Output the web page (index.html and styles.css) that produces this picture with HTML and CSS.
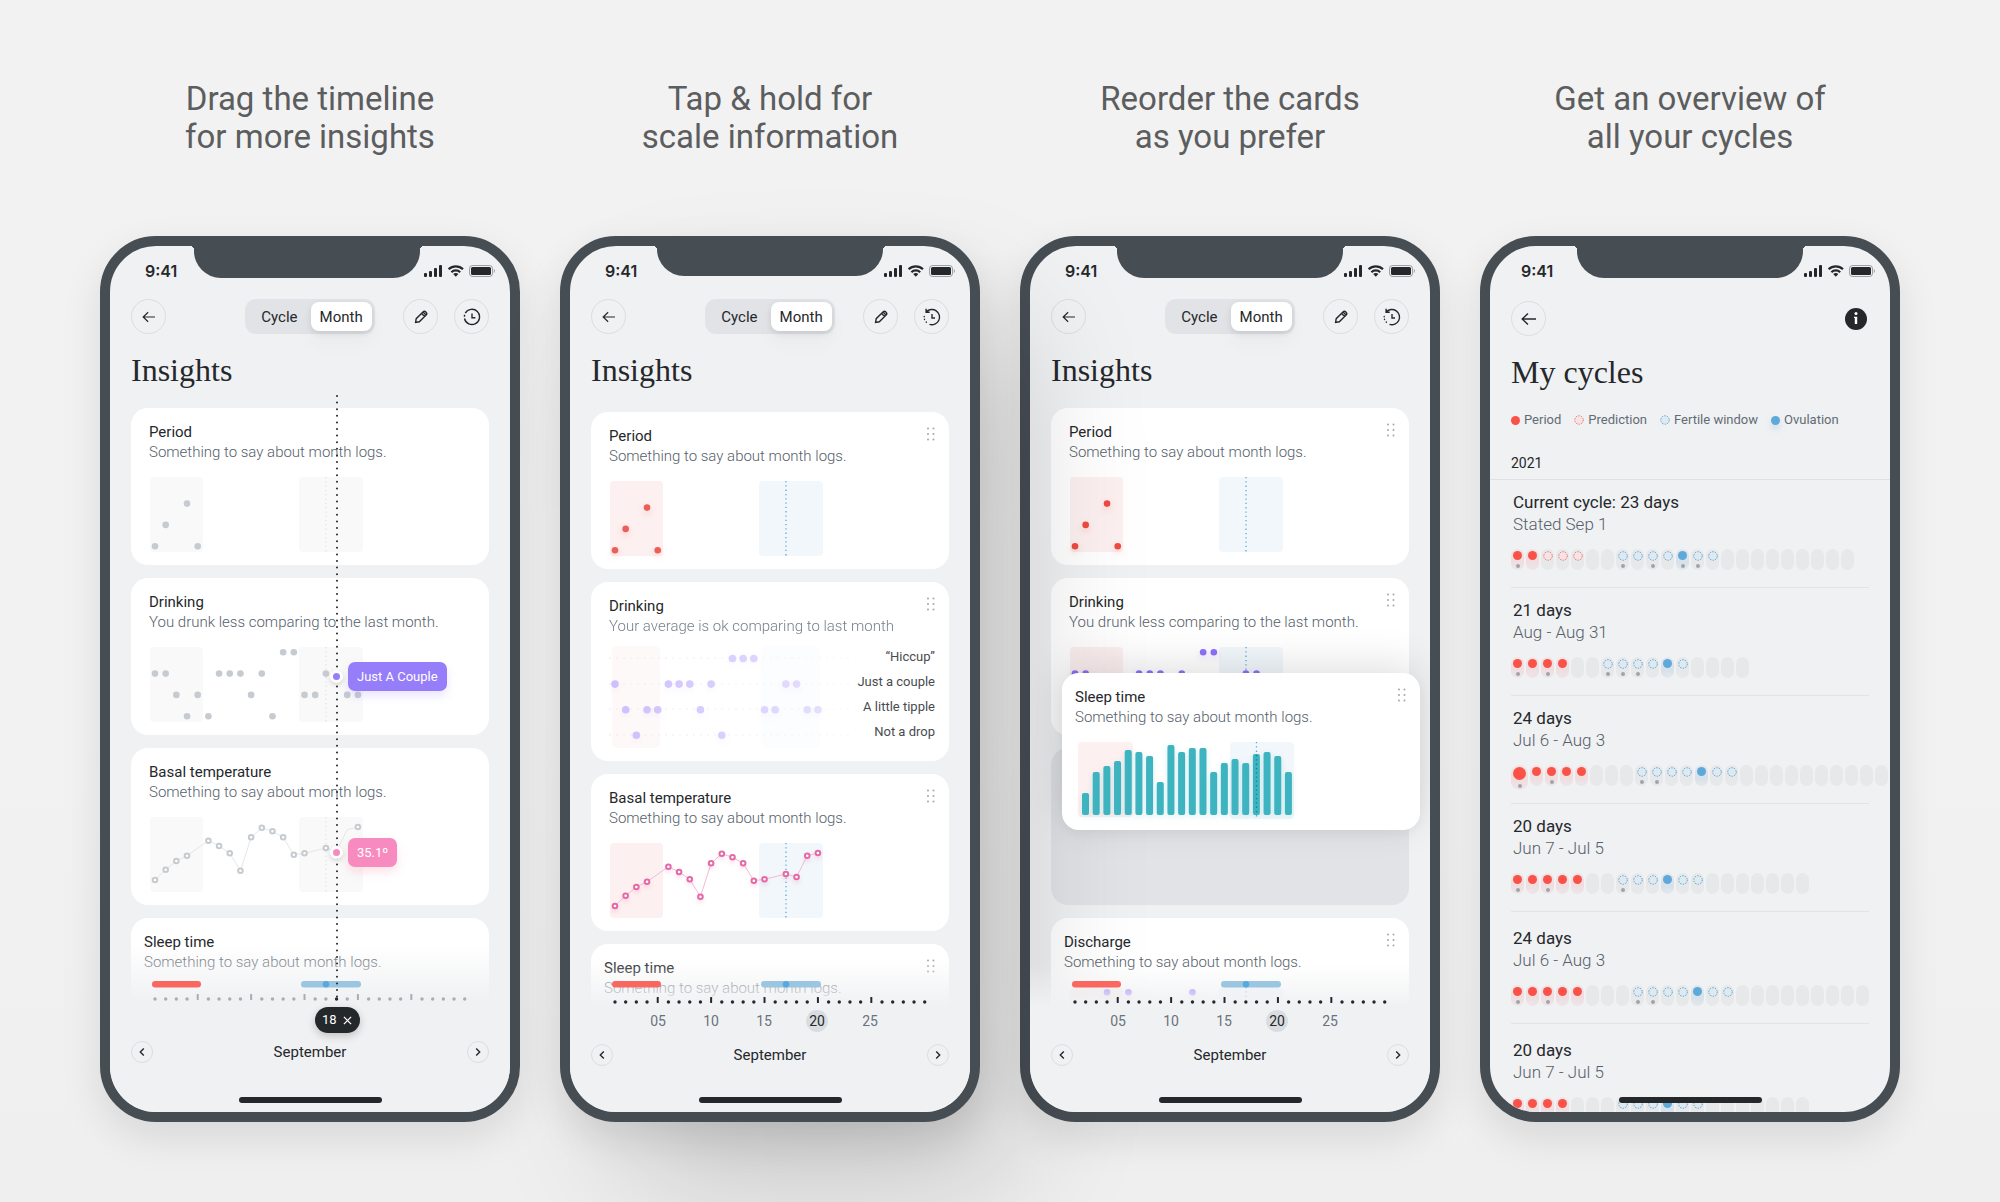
FILE: index.html
```html
<!DOCTYPE html>
<html lang="en">
<head>
    <meta charset="UTF-8">
    <meta name="viewport" content="width=device-width, initial-scale=1.0">
    <title>Cycle insights</title>
    <link rel="stylesheet" href="styles.css">
</head>
<body>
    <!-- shared icons -->
    <svg class="sprite" aria-hidden="true">
        <symbol id="icon-status" viewBox="0 0 71 14">
            <rect x="0" y="9" width="3" height="4" rx="1" />
            <rect x="5" y="7" width="3" height="6" rx="1" />
            <rect x="10" y="4" width="3" height="9" rx="1" />
            <rect x="15" y="1" width="3" height="12" rx="1" />
            <g fill="none" stroke="currentColor" stroke-width="2.2">
                <path d="M24.6 5.2a10.4 10.4 0 0 1 14.4 0" />
                <path d="M27.4 8.2a6.3 6.3 0 0 1 8.8 0" />
            </g>
            <path d="M31.8 12.8l-2.6-2.7a3.8 3.8 0 0 1 5.2 0z" />
            <rect x="45.5" y="1.5" width="23" height="11" rx="3" fill="none" stroke="currentColor" opacity=".4" />
            <rect x="47" y="3" width="20" height="8" rx="1.5" />
            <path d="M69.8 5v4c1.4-.5 1.4-3.500 0-4z" opacity=".4" />
        </symbol>
        <symbol id="icon-back" viewBox="0 0 18 14">
            <path d="M16 7H2.500M8 1.500L2.200 7 8 12.500" />
        </symbol>
        <symbol id="icon-pencil" viewBox="0 0 14 14">
            <path d="M1.600 12.400l.6-3.700 6.800-6.800c.8-.8 1.900-.8 2.600-.1l.6.6c.7.7.7 1.800-.1 2.600l-6.800 6.800zM7.600 3.400l3 3M9 2l3 3" />
        </symbol>
        <symbol id="icon-clock" viewBox="0 0 18 18">
            <path d="M2.300 5.200A7.600 7.600 0 1 1 1.500 10.500M1.500 8.800V6.800M9 5.500v4.200h3.400" />
        </symbol>
        <symbol id="icon-history" viewBox="0 0 18 18">
            <path d="M3.300 4A7.600 7.600 0 1 1 6.500 16.300M3.100.8v3.500h3.600M9 6v4h3" />
            <path d="M1.200 8.500v.2M1.500 11.300v.2M3.300 14v.2" stroke-linecap="round" />
        </symbol>
        <symbol id="icon-prev" viewBox="0 0 8 10">
            <path d="M5.800 1.500L2.300 5l3.500 3.500" />
        </symbol>
        <symbol id="icon-next" viewBox="0 0 8 10">
            <path d="M2.200 1.500L5.700 5 2.200 8.500" />
        </symbol>
        <symbol id="icon-close" viewBox="0 0 10 10">
            <path d="M1 1l8 8M9 1L1 9" />
        </symbol>
        <symbol id="icon-ring" viewBox="0 0 10 10">
            <circle cx="5" cy="5" r="4.300" stroke-dasharray="1.500 1.200" />
        </symbol>
        <symbol id="icon-grip" viewBox="0 0 8 14">
            <circle cx="1" cy="1.500" r="1" /><circle cx="6.500" cy="1.500" r="1" />
            <circle cx="1" cy="7" r="1" /><circle cx="6.500" cy="7" r="1" />
            <circle cx="1" cy="12.500" r="1" /><circle cx="6.500" cy="12.500" r="1" />
        </symbol>
    </svg>

    <main class="features">
        <!-- drag the timeline -->
        <section class="feature">
            <h2 class="caption">Drag the timeline<br>for more insights</h2>
            <div class="phone">
                <div class="screen muted">
                    <div class="notch notch-left"></div>
                    <div class="status"><span>9:41</span><svg class="status-icons"><use href="#icon-status" /></svg></div>
                    <header class="toolbar">
                        <button class="round" type="button" aria-label="Back"><svg class="icon-back"><use href="#icon-back" /></svg></button>
                        <div class="segment">
                            <button type="button">Cycle</button>
                            <button type="button" class="active">Month</button>
                        </div>
                        <div class="actions">
                            <button class="round" type="button" aria-label="Edit"><svg class="icon-pencil"><use href="#icon-pencil" /></svg></button>
                            <button class="round" type="button" aria-label="History"><svg class="icon-clock"><use href="#icon-clock" /></svg></button>
                        </div>
                    </header>
                    <h3 class="title">Insights</h3>
                    <div class="cards">
                        <article class="card">
                            <h4>Period</h4>
                            <p>Something to say about month logs.</p>
                            <div class="chart" data-chart="period"></div>
                        </article>
                        <article class="card">
                            <h4>Drinking</h4>
                            <p>You drunk less comparing to the last month.</p>
                            <div class="chart" data-chart="drinking" data-skip="18">
                                <div class="marker marker-drink"><i></i><span>Just A Couple</span></div>
                            </div>
                        </article>
                        <article class="card">
                            <h4>Basal temperature</h4>
                            <p>Something to say about month logs.</p>
                            <div class="chart" data-chart="temperature" data-skip="18">
                                <div class="marker marker-temp"><i></i><span>35.1º</span></div>
                            </div>
                        </article>
                        <article class="card card-tight">
                            <h4>Sleep time</h4>
                            <p>Something to say about month logs.</p>
                            <div class="chart"></div>
                        </article>
                    </div>
                    <svg class="cursor"><line x1="2" y1="2" x2="2" y2="603" /></svg>
                    <footer class="dock dock-picked">
                        <div class="timeline" data-current="18"></div>
                        <div class="picked">
                            <span>18</span>
                            <button type="button" aria-label="Clear day"><svg class="icon-close"><use href="#icon-close" /></svg></button>
                        </div>
                        <div class="month">
                            <button class="round small" type="button" aria-label="Previous month"><svg class="icon-step"><use href="#icon-prev" /></svg></button>
                            <span>September</span>
                            <button class="round small" type="button" aria-label="Next month"><svg class="icon-step"><use href="#icon-next" /></svg></button>
                        </div>
                        <div class="home"></div>
                    </footer>
                </div>
            </div>
        </section>

        <!-- tap & hold -->
        <section class="feature feature-front">
            <h2 class="caption">Tap &amp; hold for<br>scale information</h2>
            <div class="phone phone-front">
                <div class="screen">
                    <div class="notch notch-short"></div>
                    <div class="status"><span>9:41</span><svg class="status-icons"><use href="#icon-status" /></svg></div>
                    <header class="toolbar">
                        <button class="round" type="button" aria-label="Back"><svg class="icon-back"><use href="#icon-back" /></svg></button>
                        <div class="segment">
                            <button type="button">Cycle</button>
                            <button type="button" class="active">Month</button>
                        </div>
                        <div class="actions">
                            <button class="round" type="button" aria-label="Edit"><svg class="icon-pencil"><use href="#icon-pencil" /></svg></button>
                            <button class="round" type="button" aria-label="History"><svg class="icon-clock"><use href="#icon-history" /></svg></button>
                        </div>
                    </header>
                    <h3 class="title">Insights</h3>
                    <div class="cards cards-low">
                        <article class="card soft">
                            <button class="grip" type="button" aria-label="Move card"><svg><use href="#icon-grip" /></svg></button>
                            <h4>Period</h4>
                            <p>Something to say about month logs.</p>
                            <div class="chart" data-chart="period"></div>
                        </article>
                        <article class="card">
                            <button class="grip" type="button" aria-label="Move card"><svg><use href="#icon-grip" /></svg></button>
                            <h4>Drinking</h4>
                            <p class="faded">Your average is ok comparing to last month</p>
                            <div class="scale">
                                <div class="scale-chart" data-chart="scale"></div>
                                <ul>
                                    <li>“Hiccup”</li>
                                    <li>Just a couple</li>
                                    <li>A little tipple</li>
                                    <li>Not a drop</li>
                                </ul>
                            </div>
                        </article>
                        <article class="card soft">
                            <button class="grip" type="button" aria-label="Move card"><svg><use href="#icon-grip" /></svg></button>
                            <h4>Basal temperature</h4>
                            <p>Something to say about month logs.</p>
                            <div class="chart" data-chart="temperature"></div>
                        </article>
                        <article class="card card-tight">
                            <button class="grip" type="button" aria-label="Move card"><svg><use href="#icon-grip" /></svg></button>
                            <h4>Sleep time</h4>
                            <p>Something to say about month logs.</p>
                            <div class="chart"></div>
                        </article>
                    </div>
                    <footer class="dock">
                        <div class="timeline"></div>
                        <div class="days"><span>05</span><span>10</span><span>15</span><span class="today">20</span><span>25</span></div>
                        <div class="month">
                            <button class="round small" type="button" aria-label="Previous month"><svg class="icon-step"><use href="#icon-prev" /></svg></button>
                            <span>September</span>
                            <button class="round small" type="button" aria-label="Next month"><svg class="icon-step"><use href="#icon-next" /></svg></button>
                        </div>
                        <div class="home"></div>
                    </footer>
                </div>
            </div>
        </section>

        <!-- reorder -->
        <section class="feature">
            <h2 class="caption">Reorder the cards<br>as you prefer</h2>
            <div class="phone">
                <div class="screen">
                    <div class="notch"></div>
                    <div class="status"><span>9:41</span><svg class="status-icons"><use href="#icon-status" /></svg></div>
                    <header class="toolbar">
                        <button class="round" type="button" aria-label="Back"><svg class="icon-back"><use href="#icon-back" /></svg></button>
                        <div class="segment">
                            <button type="button">Cycle</button>
                            <button type="button" class="active">Month</button>
                        </div>
                        <div class="actions">
                            <button class="round" type="button" aria-label="Edit"><svg class="icon-pencil"><use href="#icon-pencil" /></svg></button>
                            <button class="round" type="button" aria-label="History"><svg class="icon-clock"><use href="#icon-history" /></svg></button>
                        </div>
                    </header>
                    <h3 class="title">Insights</h3>
                    <div class="cards">
                        <article class="card">
                            <button class="grip" type="button" aria-label="Move card"><svg><use href="#icon-grip" /></svg></button>
                            <h4>Period</h4>
                            <p>Something to say about month logs.</p>
                            <div class="chart" data-chart="period"></div>
                        </article>
                        <article class="card">
                            <button class="grip" type="button" aria-label="Move card"><svg><use href="#icon-grip" /></svg></button>
                            <h4>Drinking</h4>
                            <p>You drunk less comparing to the last month.</p>
                            <div class="chart" data-chart="drinking"></div>
                        </article>
                        <div class="slot">
                            <article class="card card-tight dragged">
                                <button class="grip" type="button" aria-label="Move card"><svg><use href="#icon-grip" /></svg></button>
                                <h4>Sleep time</h4>
                                <p>Something to say about month logs.</p>
                                <div class="chart" data-chart="sleep"></div>
                            </article>
                        </div>
                        <article class="card card-tight">
                            <button class="grip" type="button" aria-label="Move card"><svg><use href="#icon-grip" /></svg></button>
                            <h4>Discharge</h4>
                            <p>Something to say about month logs.</p>
                            <div class="chart chart-inset" data-chart="discharge"></div>
                        </article>
                    </div>
                    <footer class="dock dock-late">
                        <div class="timeline"></div>
                        <div class="days"><span>05</span><span>10</span><span>15</span><span class="today">20</span><span>25</span></div>
                        <div class="month">
                            <button class="round small" type="button" aria-label="Previous month"><svg class="icon-step"><use href="#icon-prev" /></svg></button>
                            <span>September</span>
                            <button class="round small" type="button" aria-label="Next month"><svg class="icon-step"><use href="#icon-next" /></svg></button>
                        </div>
                        <div class="home"></div>
                    </footer>
                </div>
            </div>
        </section>

        <!-- overview -->
        <section class="feature">
            <h2 class="caption">Get an overview of<br>all your cycles</h2>
            <div class="phone">
                <div class="screen">
                    <div class="notch"></div>
                    <div class="status status-wide"><span>9:41</span><svg class="status-icons"><use href="#icon-status" /></svg></div>
                    <header class="toolbar toolbar-low">
                        <button class="round" type="button" aria-label="Back"><svg class="icon-back large"><use href="#icon-back" /></svg></button>
                        <button class="info" type="button" aria-label="Info">
                            <svg viewBox="0 0 22 22"><circle cx="11" cy="11" r="11" /><circle class="cut" cx="11" cy="5.600" r="1.500" /><path class="cut" d="M9 8.700h3.200v7.300h-2.400v-6H9z" /></svg>
                        </button>
                    </header>
                    <h3 class="title">My cycles</h3>
                    <ul class="legend">
                        <li><i class="dot period"></i>Period</li>
                        <li><svg class="dot prediction" aria-hidden="true"><use href="#icon-ring" /></svg>Prediction</li>
                        <li><svg class="dot fertile" aria-hidden="true"><use href="#icon-ring" /></svg>Fertile window</li>
                        <li><i class="dot ovulation"></i>Ovulation</li>
                    </ul>
                    <p class="year">2021</p>
                    <div class="cycles">
                        <article class="cycle">
                            <h4>Current cycle: 23 days</h4>
                            <p>Stated Sep 1</p>
                            <div class="strip" data-days="p* p r r r - - f* f f* f o* f* f - - - - - - - - -"></div>
                        </article>
                        <article class="cycle">
                            <h4>21 days</h4>
                            <p>Aug - Aug 31</p>
                            <div class="strip" data-days="p* p p* p - - f* f* f* f o f - - - -"></div>
                        </article>
                        <article class="cycle">
                            <h4>24 days</h4>
                            <p>Jul 6 - Aug 3</p>
                            <div class="strip strip-first" data-days="p* p p* p p - - - f* f* f f o f f - - - - - - - - - - -"></div>
                        </article>
                        <article class="cycle">
                            <h4>20 days</h4>
                            <p>Jun 7 - Jul 5</p>
                            <div class="strip" data-days="p* p p* p p - - f* f f o f f - - - - - - -"></div>
                        </article>
                        <article class="cycle roomy">
                            <h4>24 days</h4>
                            <p>Jul 6 - Aug 3</p>
                            <div class="strip" data-days="p* p p* p p - - - f* f* f f o f f - - - - - - - - -"></div>
                        </article>
                        <article class="cycle roomy">
                            <h4>20 days</h4>
                            <p>Jun 7 - Jul 5</p>
                            <div class="strip" data-days="p p p p - - - f f f o f f - - - - - - -"></div>
                        </article>
                    </div>
                    <footer class="dock dock-bare">
                        <div class="home"></div>
                    </footer>
                </div>
            </div>
        </section>
    </main>
    <script src="script.js"></script>
</body>
</html>
```

FILE: styles.css
```css
* {
    box-sizing: border-box;
}

body {
    margin: 0;
    background-color: #f2f2f2;
    background-image: linear-gradient(#f2f2f2 60%, #efefef);
    color: #25282b;
    font-family: Roboto, "Liberation Sans", sans-serif;
    font-size: 15px;
    line-height: 20px;
    min-height: 100vh;
    overflow-x: hidden;
}

h2, h3, h4, p, ul {
    margin: 0;
    padding: 0;
    font-weight: 400;
    list-style: none;
}

button {
    margin: 0;
    padding: 0;
    border: none;
    background: none;
    color: inherit;
    font: inherit;
    cursor: pointer;
}

svg {
    display: block;
}

.sprite {
    position: absolute;
    width: 0;
    height: 0;
}

.features {
    display: grid;
    grid-template-columns: repeat(4, minmax(0, 1fr));
    gap: 40px;
    padding: 80px 100px;
}

.caption {
    margin-bottom: 80px;
    color: #5c5d5e;
    font-size: 33px;
    line-height: 38px;
    text-align: center;
    white-space: nowrap;
}

/* phone frame */
.phone {
    aspect-ratio: 420 / 886;
    min-height: 0;
    border: 10px solid #464d53;
    border-radius: 56px;
    background: #f0f1f3;
    box-shadow: 0 16px 40px rgba(0, 0, 0, 0.1);
}

.feature-front {
    position: relative;
    z-index: 1;
}

.phone-front {
    box-shadow: 0 16px 40px rgba(0, 0, 0, 0.1), 50px 70px 140px -20px rgba(0, 0, 0, 0.2);
}

.screen {
    position: relative;
    height: 100%;
    overflow: hidden;
    border-radius: 46px;
}

.notch {
    position: absolute;
    top: -1px;
    left: 50%;
    width: 226px;
    height: 33px;
    margin-left: -113px;
    border-radius: 0 0 27px 27px;
    background: #464d53;
}

.notch-left {
    margin-left: -116px;
}

.notch-short {
    height: 31px;
}

.notch::before,
.notch::after {
    content: "";
    position: absolute;
    top: 1px;
    width: 4px;
    height: 4px;
}

.notch::before {
    right: 100%;
    background: radial-gradient(circle at 0 100%, transparent 4px, #464d53 4px);
}

.notch::after {
    left: 100%;
    background: radial-gradient(circle at 100% 100%, transparent 4px, #464d53 4px);
}

.status {
    display: flex;
    align-items: center;
    justify-content: space-between;
    height: 50px;
    padding: 0 15px 0 35px;
    font-family: Inter, sans-serif;
    font-size: 16px;
    font-weight: 600;
}

.status-wide {
    padding-left: 31px;
}

.status-icons {
    width: 71px;
    height: 14px;
    fill: currentColor;
}

.toolbar {
    display: grid;
    grid-template-columns: 1fr auto 1fr;
    align-items: center;
    margin-top: 3px;
    padding: 0 21px;
}

.toolbar-low {
    grid-template-columns: auto auto;
    justify-content: space-between;
    margin-top: 5px;
    padding-right: 23px;
}

.actions {
    display: flex;
    justify-content: flex-end;
    gap: 16px;
}

.round {
    display: flex;
    align-items: center;
    justify-content: center;
    width: 35px;
    height: 35px;
    border: 1px solid #dcdde0;
    border-radius: 50%;
}

.round svg,
.icon-close {
    fill: none;
    stroke: currentColor;
    stroke-width: 1.4;
}

.round.small {
    width: 22px;
    height: 22px;
}

.icon-back {
    width: 16px;
    height: 12px;
}

.icon-back.large {
    width: 18px;
    height: 14px;
}

.icon-pencil {
    width: 14px;
    height: 14px;
}

.icon-clock {
    width: 18px;
    height: 18px;
}

.icon-step {
    width: 8px;
    height: 10px;
}

.icon-close {
    width: 9px;
    height: 9px;
}

.info svg {
    width: 22px;
    height: 22px;
    fill: #25282b;
}

.info .cut {
    fill: #fff;
}

.segment {
    display: flex;
    padding: 3px;
    border-radius: 11px;
    background: #e2e3e7;
}

.segment button {
    height: 29px;
    padding: 0 9px;
    border-radius: 8px;
}

.segment button:first-child {
    padding: 0 13px;
}

.segment .active {
    background: #fff;
    box-shadow: 0 2px 6px rgba(0, 0, 0, 0.1), 0 12px 20px rgba(0, 0, 0, 0.03);
}

.title {
    margin: 16px 21px 0;
    font-family: "Liberation Serif", serif;
    font-size: 32px;
    line-height: 40px;
}

/* cards */
.cards {
    display: flex;
    flex-direction: column;
    gap: 13px;
    padding: 18px 21px 0;
}

.cards-low {
    padding-top: 22px;
}

.card {
    position: relative;
    padding: 14px 14px 13px 18px;
    border-radius: 17px;
    background: #fff;
}

.card-tight {
    padding-left: 13px;
}

.card h4 {
    font-size: 15px;
}

.card p {
    color: #56606a;
    font-weight: 300;
}

.card .faded {
    opacity: 0.8;
}

.grip {
    float: right;
    margin-top: 1px;
}

.grip svg {
    width: 8px;
    height: 14px;
    fill: #a3a7ab;
}

.chart {
    position: relative;
    height: 75px;
    margin-top: 15px;
}

.chart svg {
    width: 216px;
    height: 75px;
    overflow: visible;
}

.chart-inset {
    margin-left: 5px;
}

.zone-period {
    fill: #fdf0f0;
}

.zone-fertile {
    fill: #f2f7fb;
}

.ovulation-line {
    stroke: #5aa9dc;
    stroke-width: 1.3;
    stroke-dasharray: 1.3 3;
}

.dots circle {
    fill: #ef4a41;
    filter: drop-shadow(0 3px 3px rgba(240, 70, 60, 0.2));
}

.soft .dots circle {
    fill: #ec5f59;
}

.dots-purple circle {
    fill: #8f70fb;
    filter: drop-shadow(0 3px 3px rgba(143, 112, 251, 0.2));
}

.temp-line {
    fill: none;
    stroke: #f3bcd8;
    stroke-width: 1;
}

.temp-points circle {
    fill: #fff;
    stroke: #e569a7;
    stroke-width: 2;
    filter: drop-shadow(0 3px 2px rgba(229, 105, 167, 0.2));
}

.bars rect {
    fill: #3db4c0;
    filter: drop-shadow(0 2px 3px rgba(61, 180, 192, 0.2));
}

.line-over {
    stroke: #14808f;
    stroke-width: 1.3;
    stroke-dasharray: 1.3 3;
}

.muted .zone-period,
.muted .zone-fertile {
    fill: #f9f9f9;
}

.muted .ovulation-line {
    stroke: #dfe2e4;
}

.muted .dots circle {
    fill: #c5cbd0;
    filter: none;
}

.muted .temp-line {
    stroke: #e4e7e9;
}

.muted .temp-points circle {
    stroke: #c5cbd0;
    filter: none;
}

/* value bubble next to the dragged cursor */
.marker {
    position: absolute;
    left: 181px;
    z-index: 3;
    display: flex;
    align-items: center;
    gap: 5px;
    height: 29px;
    color: #fff;
    font-size: 13px;
}

.marker-drink {
    --tint: #967dfa;
    top: 15px;
}

.marker-temp {
    --tint: #f78bbf;
    top: 21px;
}

.marker i {
    width: 13px;
    height: 13px;
    border: 3px solid #fff;
    border-radius: 50%;
    background: var(--tint);
    box-shadow: 0 2px 5px rgba(0, 0, 0, 0.15);
}

.marker span {
    padding: 0 9px;
    border-radius: 7px;
    background: var(--tint);
    line-height: 29px;
    box-shadow: 0 5px 10px rgba(150, 125, 250, 0.2);
}

.marker-temp span {
    box-shadow: 0 5px 10px rgba(247, 139, 160, 0.25);
}

.cursor {
    position: absolute;
    top: 148px;
    left: 225px;
    z-index: 2;
    width: 4px;
    height: 605px;
    stroke: #25282b;
    stroke-width: 2;
    stroke-linecap: round;
    stroke-dasharray: 0 6.6;
}

/* scale card */
.scale {
    display: flex;
    justify-content: space-between;
    height: 102px;
    margin-top: 10px;
}

.scale-chart {
    mask-image: linear-gradient(to right, rgba(0, 0, 0, 0.45), rgba(0, 0, 0, 0.2));
}

.scale-chart svg {
    width: 240px;
    height: 102px;
}

.scale-rule {
    stroke: #d2d5d9;
    stroke-dasharray: 2 5;
}

.scale ul {
    margin-top: -2px;
    color: #484c50;
    font-size: 13px;
    line-height: 25px;
    text-align: right;
    white-space: nowrap;
}

/* empty place left by the card being moved */
.slot {
    position: relative;
    height: 157px;
    border-radius: 17px;
    background: #e2e3e7;
}

.dragged {
    position: absolute;
    top: -75px;
    left: 11px;
    z-index: 1;
    width: 100%;
    box-shadow: 0 -8px 40px rgba(0, 0, 0, 0.12), 0 4px 12px rgba(0, 0, 0, 0.04);
}

/* bottom dock */
.dock {
    position: absolute;
    right: 0;
    bottom: 0;
    left: 0;
    z-index: 1;
    padding: 36px 21px 9px;
    background: linear-gradient(rgba(240, 241, 243, 0) 14px, #f0f1f3 62px);
}

.dock-picked {
    background: linear-gradient(rgba(240, 241, 243, 0), #f0f1f3 56px);
}

.dock-late {
    background: linear-gradient(rgba(240, 241, 243, 0) 20px, #f0f1f3 62px);
}

.dock-bare {
    padding-top: 0;
    background: none;
}

.timeline {
    height: 24px;
    padding-left: 18px;
}

.timeline svg {
    width: 322px;
    height: 24px;
}

.track-period {
    fill: #f86860;
}

.track-fertile {
    fill: #9ac6e1;
}

.track-ovulation {
    fill: #5aa9dc;
}

.ticks {
    fill: #25282b;
}

.muted .ticks {
    fill: #a9adb1;
}

.muted .ticks .current {
    fill: #25282b;
}

.days {
    display: flex;
    margin: 5px 0 12px 56px;
    gap: 31px;
    color: #6a737b;
    font-size: 14px;
    line-height: 22px;
    text-align: center;
}

.days span {
    width: 22px;
}

.days .today {
    border-radius: 50%;
    background: #d9dce0;
    color: #25282b;
}

.picked {
    display: flex;
    align-items: center;
    justify-content: space-between;
    width: 45px;
    height: 26px;
    margin: 2px 0 8px 184px;
    padding: 0 8px 0 7px;
    border-radius: 13px;
    background: #25282b;
    color: #fff;
    font-size: 13px;
    box-shadow: 0 3px 8px rgba(0, 0, 0, 0.2);
}

.month {
    display: flex;
    align-items: center;
    justify-content: space-between;
}

.home {
    width: 143px;
    height: 6px;
    margin: 31px auto 0;
    border-radius: 3px;
    background: #25282b;
}

.dock-picked .home {
    margin-top: 34px;
}

/* cycles overview */
.legend {
    display: flex;
    gap: 13px;
    margin: 19px 21px 0;
    color: #626c75;
    font-size: 13px;
    line-height: 18px;
    white-space: nowrap;
}

.legend li {
    display: flex;
    align-items: center;
    gap: 4px;
}

.dot {
    width: 9px;
    height: 9px;
    border-radius: 50%;
}

.dot.period {
    background: #fa5248;
}

.dot.prediction,
.dot.fertile {
    width: 10px;
    height: 10px;
}

.dot.prediction {
    fill: #f5e4e5;
    stroke: #f4655d;
}

.dot.fertile {
    fill: #dfe9f0;
    stroke: #4f9fd3;
}

.dot.ovulation {
    background: #5fa9da;
}

.legend .ovulation {
    box-shadow: 0 4px 6px rgba(95, 169, 218, 0.25);
}

.year {
    margin-top: 24px;
    padding: 0 21px 6px;
    border-bottom: 1px solid #e0e1e4;
    font-size: 14px;
}

.cycles {
    padding: 0 21px;
}

.cycle {
    height: 108px;
    padding: 11px 0 17px;
    border-bottom: 1px solid #e2e3e5;
    line-height: 22px;
}

.cycle.roomy {
    height: 112px;
    padding-top: 15px;
}

.cycle h4,
.cycle p {
    padding-left: 2px;
    font-size: 17px;
}

.cycle p {
    color: #56606a;
    font-weight: 300;
}

.strip {
    display: flex;
    align-items: flex-start;
    gap: 2px;
    margin-top: 14px;
}

.day {
    display: flex;
    flex: none;
    flex-direction: column;
    align-items: center;
    justify-content: space-between;
    width: 13px;
    height: 21px;
    padding: 2px 0;
    border-radius: 7px;
    background: #e7e8ea;
}

.day.is-period {
    background: linear-gradient(#eee4e6, #f0dddf 60%, #ebe6e9);
}

.day.is-ovulation {
    background: linear-gradient(#e3e8ed, #d6e1ea 60%, #e5e8eb);
}

.note {
    width: 4px;
    height: 4px;
    border-radius: 50%;
    background: #a2a3a8;
}

.strip-first .day:first-child {
    width: 17px;
    height: 25px;
    border-radius: 9px;
}

.strip-first .day:first-child .dot {
    width: 13px;
    height: 13px;
}
```

FILE: script.js
```js
const STEP = 10.68;
const dayX = (day) => 6 + STEP * (day - 1);

// level 0 is the top row, null means nothing was logged
const period = [3, 2, null, 1, 3];
const drinking = [1, 1, 2, 3, 2, 3, 1, 1, 1, 2, 1, 3, 0, 0, 2, 2, 1, 1, 2, 2];
const scale = [1, 2, 3, 2, 2, 1, 1, 1, 2, 1, 3, 0, 0, 0, 2, 2, 1, 1, 2, 2];
const discharge = [null, null, null, 0, null, 0, null, null, null, null, null, 0];
const temperature = [63, 52.7, 44, 38.7, null, 23.7, 29, 36.3, 53.7, 20.3, 10.7, 14.3, 20.3, 37.7, 36.3, null, 31, 34, 12.7, 10];
const sleep = [22, 43, 49, 54, 65, 63, 59, 33, 70, 63, 67, 67, 43, 52, 56, 52, 61, 63, 59, 43];

const zones = `
    <rect class="zone-period" x="1" y="0" width="53" height="75" rx="4" />
    <rect class="zone-fertile" x="150" y="0" width="64" height="75" rx="4" />
    <line class="ovulation-line" x1="177" y1="0" x2="177" y2="75" />`;

function dots(levels, cls, skip, top = 5.3, gap = 21.3, r = 3.3) {
    const circles = levels.map((level, i) => {
        if (level === null || i + 1 === skip) return "";
        return `<circle cx="${dayX(i + 1)}" cy="${top + level * gap}" r="${r}" />`;
    });
    return `<g class="dots ${cls}">${circles.join("")}</g>`;
}

function temperatureChart(skip) {
    const points = temperature
        .map((y, i) => ({ day: i + 1, x: dayX(i + 1), y }))
        .filter((p) => p.y !== null);
    const line = points.map((p) => `${p.x},${p.y}`).join(" ");
    const rings = points
        .filter((p) => !skip || (p.day !== skip && p.day !== skip + 1))
        .map((p) => `<circle cx="${p.x}" cy="${p.y}" r="2.3" />`);
    return `<polyline class="temp-line" points="${line}" /><g class="temp-points">${rings.join("")}</g>`;
}

function sleepChart() {
    const bars = sleep.map((h, i) => `<rect x="${7 + STEP * i}" y="${73 - h}" width="7" height="${h}" rx="2" />`);
    return `
        <rect class="zone-period" x="3" y="0" width="55" height="75" rx="4" />
        <rect class="zone-fertile" x="155" y="0" width="64" height="77" rx="4" />
        <line class="ovulation-line" x1="181.500" y1="0" x2="181.500" y2="75" />
        <g class="bars">${bars.join("")}</g>
        <line class="line-over" x1="181.500" y1="13" x2="181.500" y2="73" />`;
}

function scaleChart() {
    const rules = [12, 38, 63, 89].map((y) => `<line class="scale-rule" x1="0" y1="${y}" x2="240" y2="${y}" />`);
    return `
        <rect class="zone-period" x="3" y="0" width="48" height="102" rx="5" />
        <rect class="zone-fertile" x="152" y="0" width="59" height="102" rx="5" />
        <rect class="zone-fertile" x="173" y="0" width="6" height="102" />
        ${rules.join("")}
        ${dots(scale, "dots-purple", 0, 12.5, 25.6, 3.8)}`;
}

const charts = {
    period: () => zones + dots(period, ""),
    drinking: (skip) => zones + dots(drinking, "dots-purple", skip),
    discharge: () => zones + dots(discharge, "dots-purple"),
    temperature: (skip) => zones + temperatureChart(skip),
    sleep: sleepChart,
    scale: scaleChart
};

document.querySelectorAll("[data-chart]").forEach((el) => {
    const draw = charts[el.dataset.chart];
    el.insertAdjacentHTML("afterbegin", `<svg aria-hidden="true">${draw(Number(el.dataset.skip))}</svg>`);
});

document.querySelectorAll(".timeline").forEach((el) => {
    const current = Number(el.dataset.current);
    const y = current ? 18 : 21;
    let ticks = "";
    for (let day = 1; day <= 30; day++) {
        if (day % 5 === 0 && day < 30) {
            ticks += `<rect x="${dayX(day) - 1}" y="${y - 5}" width="2" height="6" rx="0.500" />`;
        } else {
            ticks += `<circle class="${day === current ? "current" : ""}" cx="${dayX(day)}" cy="${y}" r="1.700" />`;
        }
    }
    el.innerHTML = `<svg aria-hidden="true">
        <rect class="track-period" x="3" y="0" width="49" height="6.500" rx="3.250" />
        <rect class="track-fertile" x="152" y="0" width="60" height="6.500" rx="3.250" />
        <circle class="track-ovulation" cx="177" cy="3.250" r="3.250" />
        <g class="ticks">${ticks}</g>
    </svg>`;
});

const kinds = { p: "period", r: "prediction", f: "fertile", o: "ovulation" };

function dayDot(kind) {
    if (!kind) return "";
    if (kind === "period" || kind === "ovulation") return `<i class="dot ${kind}"></i>`;
    return `<svg class="dot ${kind}" aria-hidden="true"><use href="#icon-ring" /></svg>`;
}

document.querySelectorAll(".strip").forEach((el) => {
    el.innerHTML = el.dataset.days.split(" ").map((code) => {
        const kind = kinds[code[0]];
        const note = code.includes("*") ? `<i class="note"></i>` : "";
        return `<div class="day ${kind ? "is-" + kind : ""}">${dayDot(kind)}${note}</div>`;
    }).join("");
});
```
